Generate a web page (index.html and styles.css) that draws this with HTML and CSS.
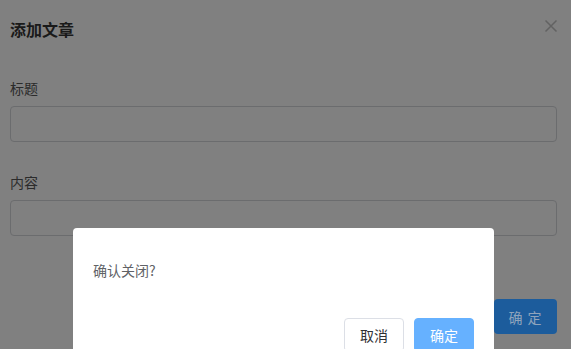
FILE: index.html
```html
<!DOCTYPE html>
<html lang="zh-CN">
<head>
<meta charset="utf-8">
<title>添加文章</title>
<link rel="stylesheet" href="styles.css">
</head>
<body>
<div class="dialog">
  <div class="dialog-header">
    <span class="dialog-title">添加文章</span>
    <button class="dialog-close" aria-label="关闭">
      <svg viewBox="0 0 14 14" width="14" height="14"><path d="M1.5 1.5 L12.5 12.5 M12.5 1.5 L1.5 12.5" stroke="currentColor" stroke-width="1.5" fill="none"/></svg>
    </button>
  </div>
  <form class="dialog-body">
    <div class="form-item">
      <label class="form-label">标题</label>
      <div class="input"></div>
    </div>
    <div class="form-item">
      <label class="form-label">内容</label>
      <div class="input"></div>
    </div>
  </form>
  <div class="dialog-footer">
    <button class="btn-primary-dim">确 定</button>
  </div>
</div>

<div class="msgbox">
  <p class="msgbox-text">确认关闭?</p>
  <div class="msgbox-btns">
    <button class="btn btn-default">取消</button>
    <button class="btn btn-primary">确定</button>
  </div>
</div>
</body>
</html>
```

FILE: styles.css
```css
html, body {
  margin: 0;
  padding: 0;
  height: 100%;
  overflow: hidden;
}
body {
  background: #808080;
  font-family: "Noto Sans CJK SC", "Noto Sans", sans-serif;
  position: relative;
}
.dialog {
  padding: 0 14px 0 10px;
}
.dialog-header {
  position: relative;
  padding-top: 17px;
  height: 24px;
}
.dialog-title {
  font-size: 16px;
  font-weight: bold;
  line-height: 24px;
  color: #1a1a1a;
}
.dialog-close {
  position: absolute;
  right: -1px;
  top: 19px;
  border: 0;
  background: none;
  padding: 0;
  color: #626262;
  width: 14px;
  height: 14px;
  display: block;
}
.dialog-close svg { display: block; }
.dialog-body {
  margin: 0;
  padding-top: 37px;
  display: flex;
  flex-direction: column;
  gap: 30px;
}
.form-item {
  display: flex;
  flex-direction: column;
  gap: 8px;
}
.form-label {
  font-size: 14px;
  line-height: 20px;
  color: #2b2b2b;
}
.input {
  height: 34px;
  border: 1px solid #6b6c6e;
  border-radius: 4px;
  background: #808080;
}
.dialog-footer {
  display: flex;
  justify-content: flex-end;
  padding-top: 63px;
}
.btn-primary-dim {
  width: 63px;
  height: 35px;
  border: 0;
  border-radius: 4px;
  background: #1c5c9c;
  color: #8fa4bc;
  font-family: inherit;
  font-size: 14px;
  letter-spacing: 1px;
  padding: 0;
}
.msgbox {
  position: absolute;
  left: 73px;
  top: 228px;
  width: 421px;
  height: 121px;
  overflow: hidden;
  background: #fff;
  border-radius: 4px 4px 0 0;
  box-sizing: border-box;
  padding: 30px 20px 0 20px;
}
.msgbox-text {
  margin: 0;
  font-size: 14px;
  line-height: 24px;
  color: #606266;
}
.msgbox-btns {
  margin-top: 36px;
  display: flex;
  justify-content: flex-end;
  gap: 10px;
}
.btn {
  width: 60px;
  height: 34px;
  border-radius: 4px;
  font-family: inherit;
  font-size: 14px;
  padding: 0;
  box-sizing: border-box;
}
.btn-default {
  background: #fff;
  border: 1px solid #dcdfe6;
  color: #303133;
}
.btn-primary {
  background: #66b1ff;
  border: 1px solid #66b1ff;
  color: #fff;
}
```
